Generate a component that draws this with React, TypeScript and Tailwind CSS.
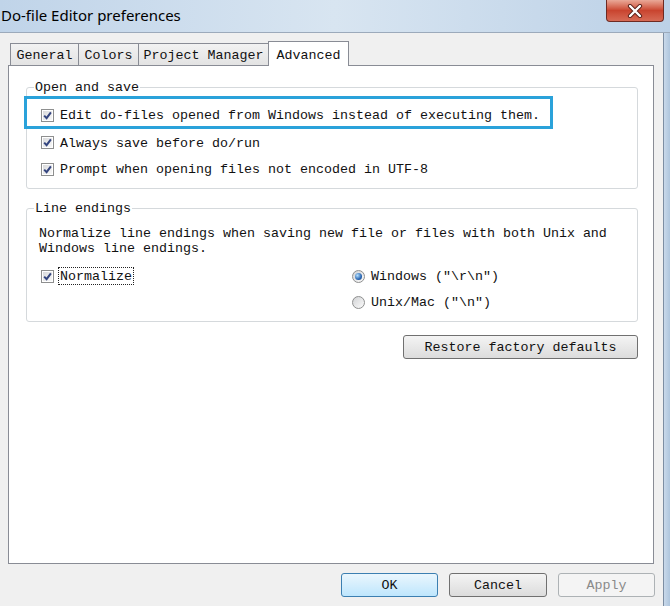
import React from "react";

const mono = "font-['Liberation_Mono',monospace] text-[13.33px] text-[#111]";

function Check() {
  return (
    <span className="w-[13px] h-[13px] border border-[#8e8f8f] bg-white p-[1px] shrink-0 flex">
      <span className="flex-1 bg-gradient-to-br from-[#d9dadc] to-[#f8f8f8] flex items-center justify-center">
        <svg width="9" height="9" viewBox="0 0 9 9">
          <path d="M1.2 4.6 L3.6 7.2 L7.9 1.3" stroke="#34457f" strokeWidth="2" fill="none" />
        </svg>
      </span>
    </span>
  );
}

function Radio({ on }: { on?: boolean }) {
  return (
    <span className="w-[13px] h-[13px] rounded-full border border-[#8e8f8f] bg-gradient-to-br from-[#d2d3d5] to-[#fbfbfb] flex items-center justify-center shrink-0">
      {on && (
        <span className="w-[7px] h-[7px] rounded-full bg-[radial-gradient(circle_at_35%_35%,#b4e0ff,#2a67b3_60%,#123f80)]" />
      )}
    </span>
  );
}

function Tab({ label, width, active }: { label: string; width: string; active?: boolean }) {
  if (active) {
    return (
      <div
        className={`${width} h-[25px] -mb-[1px] -ml-[1px] relative z-10 border border-b-0 border-[#898c95] bg-white flex items-start justify-center pt-[4px]`}
      >
        <span className={mono}>{label}</span>
      </div>
    );
  }
  return (
    <div
      className={`${width} h-[22px] -ml-[1px] first:ml-0 border border-b-0 border-[#898c95] bg-gradient-to-b from-[#f2f2f2] to-[#e3e3e3] flex items-center justify-center pt-[3px]`}
    >
      <span className={mono}>{label}</span>
    </div>
  );
}

function Button({ label, kind, width }: { label: string; kind?: "default" | "disabled"; width: string }) {
  const look =
    kind === "default"
      ? "border-[#3c7fb1] bg-gradient-to-b from-[#eaf6fd] to-[#bee6fd] text-[#111]"
      : kind === "disabled"
      ? "border-[#adb2b5] bg-[#f4f4f4] text-[#8a8a8a]"
      : "border-[#707070] bg-gradient-to-b from-[#f4f4f4] to-[#dcdcdc] text-[#111]";
  return (
    <div className={`${width} h-[24px] rounded-[3px] border flex items-center justify-center pt-[2px] ${look}`}>
      <span className="font-['Liberation_Mono',monospace] text-[13.33px]">{label}</span>
    </div>
  );
}

export default function App() {
  return (
    <div className="w-[670px] h-[606px] overflow-hidden flex flex-col bg-[#f0f0f0]">
      {/* Title bar */}
      <div className="h-[32px] shrink-0 flex items-start justify-between bg-gradient-to-r from-[#c0d4e9] via-[#d8e5f1] to-[#bcd1e7]">
        <span className="font-['Noto_Sans',sans-serif] text-[15px] text-black leading-[20px] pl-[1px] pt-[5px]">
          Do-file Editor preferences
        </span>
        <div className="w-[58px] h-[22px] mr-[6px] rounded-b-[4px] border border-t-0 border-[#6e2a22] bg-gradient-to-b from-[#e9a898] via-[#c9442f] to-[#d66a55] flex items-center justify-center">
          <svg width="16" height="14" viewBox="0 0 16 14">
            <path d="M3 2 L13 12 M13 2 L3 12" stroke="#5a2019" strokeWidth="4.2" strokeLinecap="round" />
            <path d="M3 2 L13 12 M13 2 L3 12" stroke="#ffffff" strokeWidth="2.4" strokeLinecap="round" />
          </svg>
        </div>
      </div>

      <div className="flex flex-1 border-t border-[#9caabb]">
        {/* Client area */}
        <div className="flex-1 flex flex-col pt-[8px]">
          {/* Tabs */}
          <div className="flex items-end h-[24px] ml-[10px]">
            <Tab label="General" width="w-[69px]" />
            <Tab label="Colors" width="w-[61px]" />
            <Tab label="Project Manager" width="w-[131px]" />
            <Tab label="Advanced" width="w-[81px]" active />
          </div>

          {/* Panel */}
          <div className="ml-[8px] w-[646px] h-[499px] border border-[#898c95] bg-white flex flex-col pt-[21px] pl-[17px] pr-[15px]">
            {/* Open and save */}
            <div className="relative border border-[#d5d9dc] rounded-[3px] pt-[8px] pb-[7px]">
              <span className={`absolute -top-[8px] left-[7px] bg-white px-[1px] leading-[16px] ${mono}`}>
                Open and save
              </span>
              <div className="-ml-[3px] w-[529px] h-[33px] border-[3px] border-[#2aa2da] flex items-center pl-[14px] pt-[5px] gap-[6px]">
                <Check />
                <span className={`pt-[2px] ${mono}`}>Edit do-files opened from Windows instead of executing them.</span>
              </div>
              <div className="h-[26px] flex items-center pl-[14px] gap-[6px] pt-[1px]">
                <Check />
                <span className={`pt-[2px] ${mono}`}>Always save before do/run</span>
              </div>
              <div className="h-[26px] flex items-center pl-[14px] gap-[6px] pt-[2px]">
                <Check />
                <span className={`pt-[2px] ${mono}`}>Prompt when opening files not encoded in UTF-8</span>
              </div>
            </div>

            {/* Line endings */}
            <div className="relative mt-[19px] border border-[#d5d9dc] rounded-[3px] pt-[17px] pb-[6px]">
              <span className={`absolute -top-[8px] left-[7px] bg-white px-[1px] leading-[16px] ${mono}`}>
                Line endings
              </span>
              <p className={`pl-[12px] leading-[15px] ${mono}`}>
                Normalize line endings when saving new file or files with both Unix and
                <br />
                Windows line endings.
              </p>
              <div className="flex mt-[7px]">
                <div className="w-[325px] h-[26px] flex items-center pl-[14px] gap-[5px]">
                  <Check />
                  <span className={`outline outline-1 outline-dotted outline-[#222] px-[1px] leading-[15px] pt-[1px] ${mono}`}>
                    Normalize
                  </span>
                </div>
                <div className="flex flex-col">
                  <div className="h-[26px] flex items-center gap-[6px]">
                    <Radio on />
                    <span className={`pt-[2px] ${mono}`}>Windows ("\r\n")</span>
                  </div>
                  <div className="h-[26px] flex items-center gap-[6px]">
                    <Radio />
                    <span className={`pt-[2px] ${mono}`}>Unix/Mac ("\n")</span>
                  </div>
                </div>
              </div>
            </div>

            <div className="self-end mt-[13px]">
              <Button label="Restore factory defaults" width="w-[235px]" />
            </div>
          </div>

          {/* Dialog buttons */}
          <div className="flex justify-end gap-[11px] mt-[9px] pr-[8px]">
            <Button label="OK" kind="default" width="w-[97px]" />
            <Button label="Cancel" width="w-[98px]" />
            <Button label="Apply" kind="disabled" width="w-[97px]" />
          </div>
        </div>

        {/* Window frame edge */}
        <div className="w-[7px] shrink-0 border-l border-[#7d8ea3] bg-gradient-to-r from-[#c9d9ea] to-[#aec5dd]" />
      </div>
    </div>
  );
}
